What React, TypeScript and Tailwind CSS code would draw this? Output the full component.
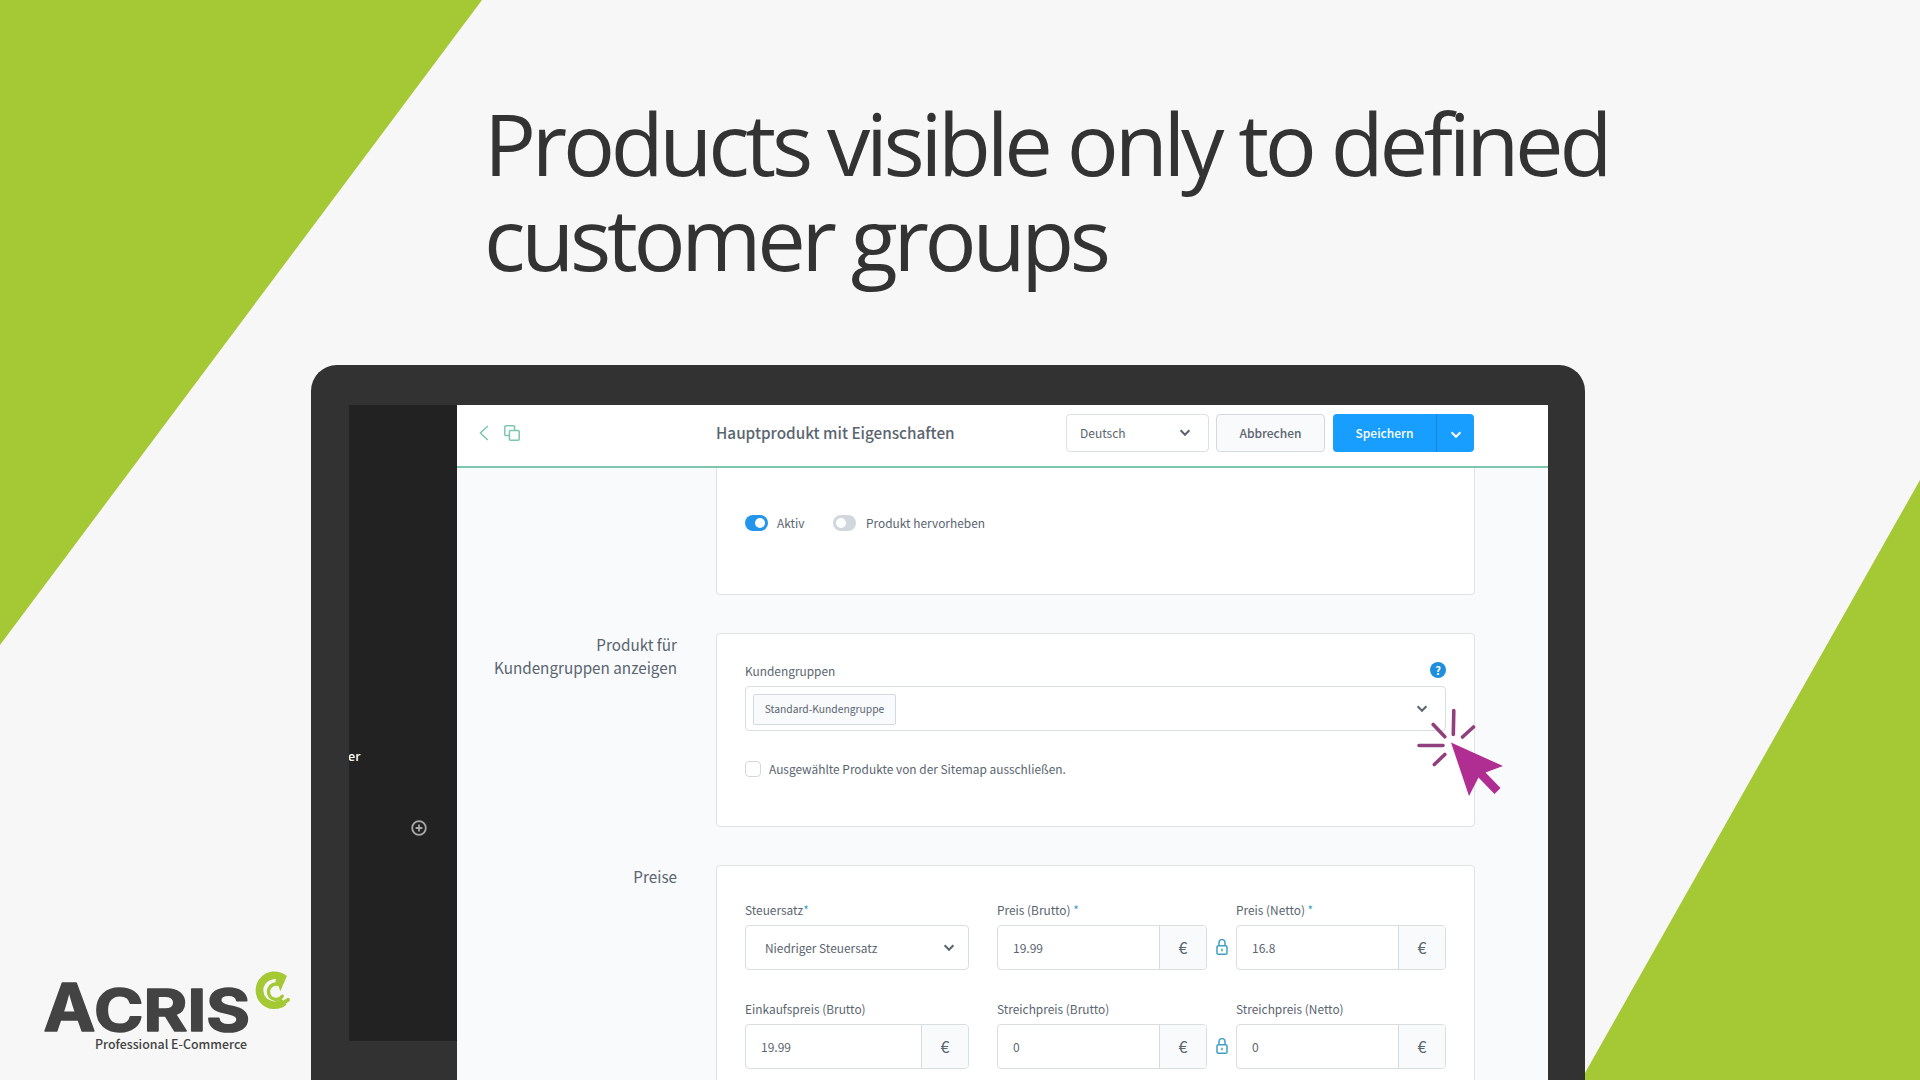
import React from 'react';

const Chevron = ({className = ""}: { className?: string }) => (
    <svg viewBox="0 0 12 8" className={`w-3 h-2 shrink-0 ${className}`} fill="none" stroke="currentColor" strokeWidth="2">
        <path d="M1.6 1.3 6 5.8l4.4-4.5"/>
    </svg>
);

const Lock = () => (
    <div className="w-[29px] h-[45px] flex items-center justify-center text-[#3f9fc4]">
        <svg viewBox="0 0 12 16" className="w-3 h-4 mb-0.5" fill="none" stroke="currentColor" strokeWidth="1.5">
            <rect x="1" y="6.8" width="10" height="8.4" rx="1.3"/>
            <path d="M3 6.8V3.6a3 3 0 0 1 6 0v3.2M6 9.8v2.4"/>
        </svg>
    </div>
);

type FieldProps = {
    label: string,
    value: string,
    required?: string,
    width: string
}

const PriceField = ({label, value, required, width}: FieldProps) => (
    <div className={`flex flex-col ${width}`}>
        <Label text={label} required={required}/>
        <div className="h-[45px] flex border border-[#d9dee1] rounded-[4px] overflow-hidden">
            <div className="flex-1 flex items-center pl-[15px] text-[12px]">{value}</div>
            <div className="w-[47px] flex items-center justify-center border-l border-[#d6dbe0] bg-[#f9fafc] pb-0.5 text-[16px]">€</div>
        </div>
    </div>
);

const Label = ({text, required}: { text: string, required?: string }) => (
    <div className="h-[26px] leading-[21px] text-[11.9px] whitespace-pre">
        {text}{required && <span className="text-[#3f9fc4]">{required}</span>}
    </div>
);

const Logo = () => (
    <svg viewBox="0 0 260 90" className="absolute left-10 top-[965px] w-[260px] h-[90px]">
        <g fill="#434343" stroke="#434343" strokeWidth="1.6" strokeLinejoin="round" fontFamily="Inter" fontWeight="700">
            <text x="3.5" y="66" fontSize="66" textLength="52" lengthAdjust="spacingAndGlyphs">A</text>
            <text x="54" y="66" fontSize="57.5" textLength="156" lengthAdjust="spacingAndGlyphs">CRIS</text>
        </g>
        <text x="55" y="83.5" fill="#434343" fontFamily="Noto Sans CJK JP" fontWeight="500" fontSize="12.5" textLength="152" lengthAdjust="spacingAndGlyphs">Professional E-Commerce</text>
        <g transform="translate(200 -4.5) scale(.3333)" fill="none" stroke="#a5c835">
            <path d="M130 53A45 45 0 1 0 132 124" strokeWidth="23"/>
            <path d="M130 127 144 118" strokeWidth="12" strokeLinecap="round"/>
            <path d="M116 72A23 23 0 1 0 127 107" strokeWidth="10" strokeLinecap="round"/>
            <path d="M141 46 121 92 114 72 106 62 116 38Z" fill="#a5c835" stroke="none"/>
        </g>
    </svg>
);

const Cursor = () => (
    <svg viewBox="0 0 90 90" className="absolute left-[1415px] top-[706px] w-[90px] h-[90px]">
        <path d="M36 36.5 88 60 70.5 66.5 85.5 82 79.5 88 63.5 71.5 54 90Z" fill="#b02e91"/>
        <g stroke="#92407d" strokeWidth="3.6" strokeLinecap="round">
            <path d="M38.8 4.5 38.3 28.5M18.2 18.5 29.8 30.8M4 39.5H28M19.3 58.5 29.8 48.5M47.5 31 58.5 21"/>
        </g>
    </svg>
);

const Toggle = ({on}: { on?: boolean }) => (
    <div className={`w-[23px] h-4 rounded-full flex items-center px-[3px] ${on ? "bg-[#2395ea] justify-end" : "bg-[#d1d7dc]"}`}>
        <div className="size-2.5 rounded-full bg-white"/>
    </div>
);

const Section = ({title, className, children}: { title?: React.ReactNode, className: string, children: React.ReactNode }) => (
    <div className="flex">
        <div className="w-[220px] mr-[39px] text-right text-[15.25px] leading-[22.6px]">{title}</div>
        <div className={`w-[759px] border border-[#dfe3e6] bg-white rounded-[4px] px-[28px] ${className}`}>{children}</div>
    </div>
);

const App = () => {
    return (
        <div className="relative w-[1920px] h-[1080px] overflow-hidden bg-[#f7f7f7] font-['Noto_Sans_CJK_JP','Noto_Sans',sans-serif] text-[#5a6570]">
            <svg viewBox="0 0 1920 1080" className="absolute inset-0 w-full h-full" fill="#a5c835">
                <path d="M0 0H482L0 645ZM1920 480V1080H1581Z"/>
            </svg>

            <h1 className="relative h-[365px] pt-[95px] pl-[484px] font-['Open_Sans',sans-serif] text-[86.6px] leading-[95px] tracking-[-4.3px] text-[#333333] whitespace-nowrap">
                Products visible only to defined<br/>customer groups
            </h1>

            <div className="relative ml-[311px] w-[1274px] h-[715px] rounded-t-[26px] bg-[#323232] pt-10 pl-[38px] flex">
                <div className="w-[108px] h-[636px] bg-[#222222] overflow-hidden text-white">
                    <div className="mt-[341px] -ml-[8px] text-[12.6px] leading-[20px] font-medium">ger</div>
                    <svg viewBox="0 0 16 16" className="size-4 mt-[54px] ml-[62px]" fill="none" stroke="#a9a9a9" strokeWidth="1.8">
                        <circle cx="8" cy="8" r="6.8"/>
                        <path d="M8 4.6v6.8M4.6 8h6.8"/>
                    </svg>
                </div>

                <div className="w-[1091px] h-[675px] bg-[#f9fafc] overflow-hidden">
                    <div className="h-[63px] border-b-2 border-[#7cc7ac] bg-white flex pl-[22px] pt-[9px] text-[12px]">
                        <div className="w-[237px] flex gap-[15px] pt-[11px] text-[#7cc7ac]">
                            <svg viewBox="0 0 10 16" className="w-2.5 h-4" fill="none" stroke="currentColor" strokeWidth="1.5">
                                <path d="M8.8 1 1.4 8l7.4 7"/>
                            </svg>
                            <svg viewBox="0 0 16 16" className="size-4" fill="none" stroke="currentColor" strokeWidth="1.5">
                                <rect x="5.4" y="5.4" width="9.8" height="9.8" rx="1.2"/>
                                <path d="M5.4 10.6H2A1.2 1.2 0 0 1 .8 9.4V2A1.2 1.2 0 0 1 2 .8h7.4A1.2 1.2 0 0 1 10.6 2v3.4"/>
                            </svg>
                        </div>
                        <div className="w-[350px] text-[15.3px] leading-[37px] font-medium">Hauptprodukt mit Eigenschaften</div>
                        <div className="w-[143px] h-[38px] flex items-center justify-between pl-[13px] pr-[17px] border border-[#dbe0e3] rounded-[4px]">
                            Deutsch<Chevron/>
                        </div>
                        <div className="ml-[7px] w-[109px] h-[38px] flex items-center justify-center border border-[#d3d9de] rounded-[4px] bg-[#f9fafc] font-medium">Abbrechen</div>
                        <div className="ml-2 w-[141px] h-[38px] flex rounded-[4px] bg-[#189eff] text-white font-medium">
                            <div className="w-[104px] flex items-center justify-center border-r border-[#1a86d9]">Speichern</div>
                            <div className="flex-1 flex items-center justify-center pt-1"><Chevron/></div>
                        </div>
                    </div>

                    <Section className="h-[127px] border-t-0 rounded-t-none">
                        <div className="mt-[45px] h-[20px] flex items-center text-[11.9px]">
                            <Toggle on/><span className="ml-[9px] w-[56px]">Aktiv</span>
                            <Toggle/><span className="ml-[10px]">Produkt hervorheben</span>
                        </div>
                    </Section>

                    <div className="h-[38px]"/>

                    <Section className="h-[194px] pt-[26px]" title={<>Produkt für<br/>Kundengruppen anzeigen</>}>
                        <div className="flex justify-between">
                            <Label text="Kundengruppen"/>
                            <div className="size-4 mt-0.5 rounded-full bg-[#1f8fdd] text-white text-[11px] font-bold flex items-center justify-center">?</div>
                        </div>
                        <div className="h-[45px] flex items-center justify-between border border-[#d9dee1] rounded-[4px] pl-[7px] pr-[17px]">
                            <div className="w-[143px] h-[31px] mt-px flex items-center justify-center border border-[#d3d9de] rounded-[2px] bg-[#f9fafc] text-[10.3px]">Standard-Kundengruppe</div>
                            <Chevron/>
                        </div>
                        <div className="mt-[28px] flex items-center gap-2 text-[11.9px] leading-[20px]">
                            <div className="size-4 border border-[#d3d9de] rounded-[4px]"/>
                            Ausgewählte Produkte von der Sitemap ausschließen.
                        </div>
                    </Section>

                    <div className="h-[38px]"/>

                    <Section className="h-[260px] pt-[33px] flex flex-col gap-7" title="Preise">
                        <div className="flex items-end">
                            <div className="w-[224px] mr-[28px]">
                                <Label text="Steuersatz" required="*"/>
                                <div className="h-[45px] flex items-center justify-between border border-[#d9dee1] rounded-[4px] pl-[19px] pr-[13px] text-[11.9px]">
                                    Niedriger Steuersatz<Chevron/>
                                </div>
                            </div>
                            <PriceField width="w-[210px]" label="Preis (Brutto)" required=" *" value="19.99"/>
                            <Lock/>
                            <PriceField width="w-[210px]" label="Preis (Netto)" required=" *" value="16.8"/>
                        </div>
                        <div className="flex items-end">
                            <PriceField width="w-[224px] mr-[28px]" label="Einkaufspreis (Brutto)" value="19.99"/>
                            <PriceField width="w-[210px]" label="Streichpreis (Brutto)" value="0"/>
                            <Lock/>
                            <PriceField width="w-[210px]" label="Streichpreis (Netto)" value="0"/>
                        </div>
                    </Section>
                </div>
            </div>

            <Cursor/>
            <Logo/>
        </div>
    );
};

export default App;
